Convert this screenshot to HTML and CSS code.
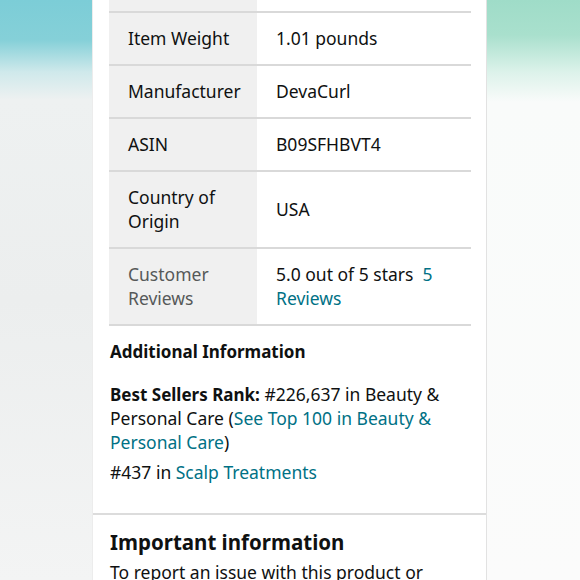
FILE: index.html
```html
<!DOCTYPE html>
<html lang="en">
<head>
<meta charset="utf-8">
<title>Product details</title>
<link rel="stylesheet" href="styles.css">
</head>
<body>
<div class="backdrop">
  <main class="panel">
    <section class="details">
      <table class="spec">
        <tr class="row-cut"><th></th><td></td></tr>
        <tr><th>Item Weight</th><td>1.01 pounds</td></tr>
        <tr><th>Manufacturer</th><td>DevaCurl</td></tr>
        <tr><th>ASIN</th><td>B09SFHBVT4</td></tr>
        <tr><th>Country of<br>Origin</th><td>USA</td></tr>
        <tr><th class="muted">Customer<br>Reviews</th><td>5.0 out of 5 stars&nbsp; <a class="link" href="#">5<br>Reviews</a></td></tr>
      </table>
      <h3 class="sub">Additional Information</h3>
      <p class="rank"><b class="strong">Best Sellers Rank:</b> #226,637 in Beauty &amp; Personal Care (<a class="link" href="#">See Top 100 in Beauty &amp; Personal Care</a>)</p>
      <p class="rank second">#437 in <a class="link" href="#">Scalp Treatments</a></p>
    </section>
    <section class="important">
      <h2 class="heading">Important information</h2>
      <p class="body-text">To report an issue with this product or</p>
    </section>
  </main>
</div>
</body>
</html>
```
FILE: styles.css
```css
html, body {
  margin: 0;
  padding: 0;
}
body {
  width: 580px;
  height: 580px;
  overflow: hidden;
  font-family: "Noto Sans", "Open Sans", sans-serif;
  color: #0f1111;
}
.backdrop {
  height: 580px;
  background:
    linear-gradient(to bottom, #7ccdd7 0px, #85d0d8 40px, #cfe9eb 72px, #eef1f1 100px, #eceeee 300px, #f3f4f4 580px) left top / 50% 100% no-repeat,
    linear-gradient(to bottom, #9fdcc8 0px, #a9e0cd 35px, #dcf2ea 72px, #f9fbfa 102px, #fbfbfb 580px) right top / 50% 100% no-repeat;
  padding-left: 93px;
}
.panel {
  width: 393px;
  height: 580px;
  background: #fff;
  border-right: 1px solid #e2e2e2;
  box-shadow: -1px 0 0 #ececec;
}
.details {
  padding: 0 16px 29px 16px;
  border-bottom: 2px solid #dcdcdc;
}
.spec {
  width: 362px;
  border-collapse: collapse;
  font-size: 17.5px;
  line-height: 24px;
}
.spec tr {
  border-bottom: 2px solid #d9d9d9;
}
.spec th {
  width: 129px;
  background: #f0f0f0;
  text-align: left;
  font-weight: 400;
  padding: 13px 0 14px 19px;
  vertical-align: middle;
}
.spec td {
  padding: 13px 0 14px 19px;
  vertical-align: middle;
}
.spec .row-cut th,
.spec .row-cut td {
  height: 11px;
  padding: 0;
}
.spec .muted {
  color: #565959;
}
.link {
  color: #007185;
  text-decoration: none;
}
.sub {
  margin: 14px 0 0 1px;
  font-size: 17px;
  line-height: 24px;
  font-weight: 700;
}
.rank {
  margin: 18px 0 0 1px;
  font-size: 17.5px;
  line-height: 24px;
}
.rank .strong {
  font-size: 17px;
  line-height: 0;
}
.rank.second {
  margin-top: 6px;
}
.important {
  padding: 13px 16px 0 17px;
}
.heading {
  margin: 0;
  font-size: 20.5px;
  line-height: 28px;
  font-weight: 700;
}
.body-text {
  margin: 4px 0 0 0;
  font-size: 17.5px;
  line-height: 24px;
}
```
